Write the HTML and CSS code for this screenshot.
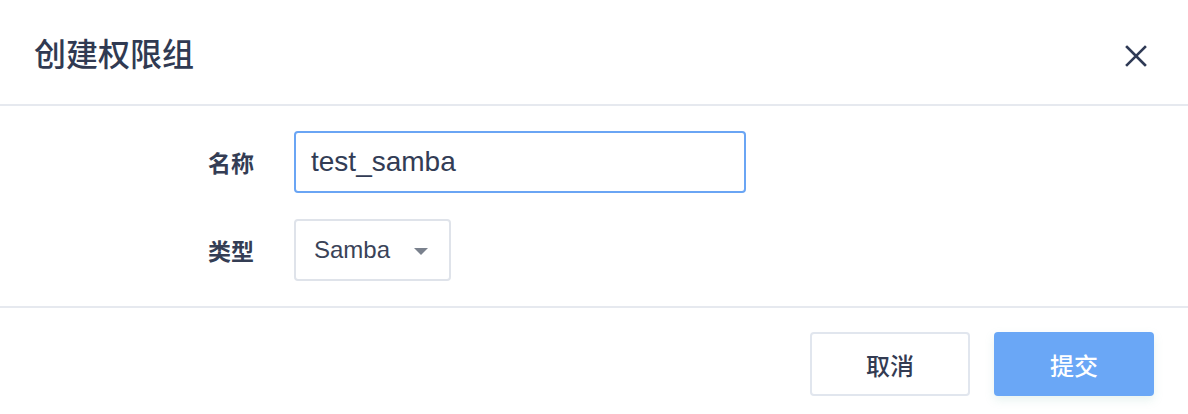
FILE: index.html
```html
<!DOCTYPE html>
<html lang="zh-CN">
<head>
<meta charset="utf-8">
<title>创建权限组</title>
<link rel="stylesheet" href="styles.css">
</head>
<body>
<div class="dialog">
  <header class="dialog-header">
    <h1 class="dialog-title">创建权限组</h1>
    <button class="close-btn" type="button" aria-label="关闭">
      <svg width="22" height="22" viewBox="0 0 22 22"><path d="M2 2 L20 20 M20 2 L2 20" stroke="#2f3a55" stroke-width="2.6" stroke-linecap="square" fill="none"/></svg>
    </button>
  </header>
  <main class="dialog-body">
    <div class="form-row">
      <label class="form-label">名称</label>
      <div class="text-input">test_samba</div>
    </div>
    <div class="form-row">
      <label class="form-label">类型</label>
      <div class="select">
        <span class="select-value">Samba</span>
        <span class="select-arrow"></span>
      </div>
    </div>
  </main>
  <footer class="dialog-footer">
    <button class="btn btn-cancel" type="button">取消</button>
    <button class="btn btn-submit" type="button">提交</button>
  </footer>
</div>
</body>
</html>
```
FILE: styles.css
```css
html, body {
  margin: 0;
  padding: 0;
  background: #ffffff;
}
body {
  font-family: "Liberation Sans", Arial, "Noto Sans CJK SC", sans-serif;
  color: #333d55;
}
.dialog {
  width: 1188px;
  height: 414px;
  display: flex;
  flex-direction: column;
}
.dialog-header {
  height: 104px;
  border-bottom: 2px solid #e6e9ef;
  display: flex;
  align-items: center;
  justify-content: space-between;
  padding: 0 41px 0 34px;
}
.dialog-title {
  margin: 0;
  font-family: "Noto Sans CJK SC", sans-serif;
  font-size: 32px;
  font-weight: 500;
  color: #303a52;
  line-height: 1;
}
.close-btn {
  border: 0;
  background: none;
  padding: 0;
  width: 22px;
  height: 22px;
  margin-top: 8px;
  display: flex;
}
.dialog-body {
  height: 202px;
  border-bottom: 2px solid #e6e9ef;
  box-sizing: border-box;
  padding-top: 25px;
  display: flex;
  flex-direction: column;
  gap: 26px;
}
.form-row {
  display: flex;
  align-items: center;
}
.form-label {
  width: 255px;
  box-sizing: border-box;
  padding-right: 1px;
  text-align: right;
  font-family: "Noto Sans CJK SC", sans-serif;
  font-size: 23px;
  font-weight: 700;
  color: #343d54;
  margin-right: 39px;
}
.text-input {
  width: 452px;
  height: 62px;
  box-sizing: border-box;
  border: 2px solid #6aa5f4;
  border-radius: 4px;
  padding-left: 15px;
  display: flex;
  align-items: center;
  font-size: 28px;
  color: #323c55;
}
.select {
  width: 157px;
  height: 62px;
  box-sizing: border-box;
  border: 2px solid #dfe3ea;
  border-radius: 4px;
  padding: 0 21px 0 18px;
  display: flex;
  align-items: center;
  justify-content: space-between;
  font-size: 24px;
  color: #3a4358;
}
.select-arrow {
  width: 0;
  height: 0;
  border-left: 7px solid transparent;
  border-right: 7px solid transparent;
  border-top: 7px solid #7a818d;
  margin-top: 2px;
}
.dialog-footer {
  flex: 1;
  display: flex;
  justify-content: flex-end;
  align-items: flex-start;
  padding: 24px 34px 0 0;
  gap: 24px;
}
.btn {
  width: 160px;
  height: 64px;
  box-sizing: border-box;
  border-radius: 4px;
  font-family: "Noto Sans CJK SC", sans-serif;
  font-size: 24px;
  font-weight: 500;
  cursor: pointer;
}
.btn-cancel {
  background: #ffffff;
  border: 2px solid #e1e6ee;
  color: #333b52;
}
.btn-submit {
  background: #6aa7f6;
  border: 0;
  color: #ffffff;
  box-shadow: 0 4px 10px rgba(120, 190, 170, 0.18);
}
```
